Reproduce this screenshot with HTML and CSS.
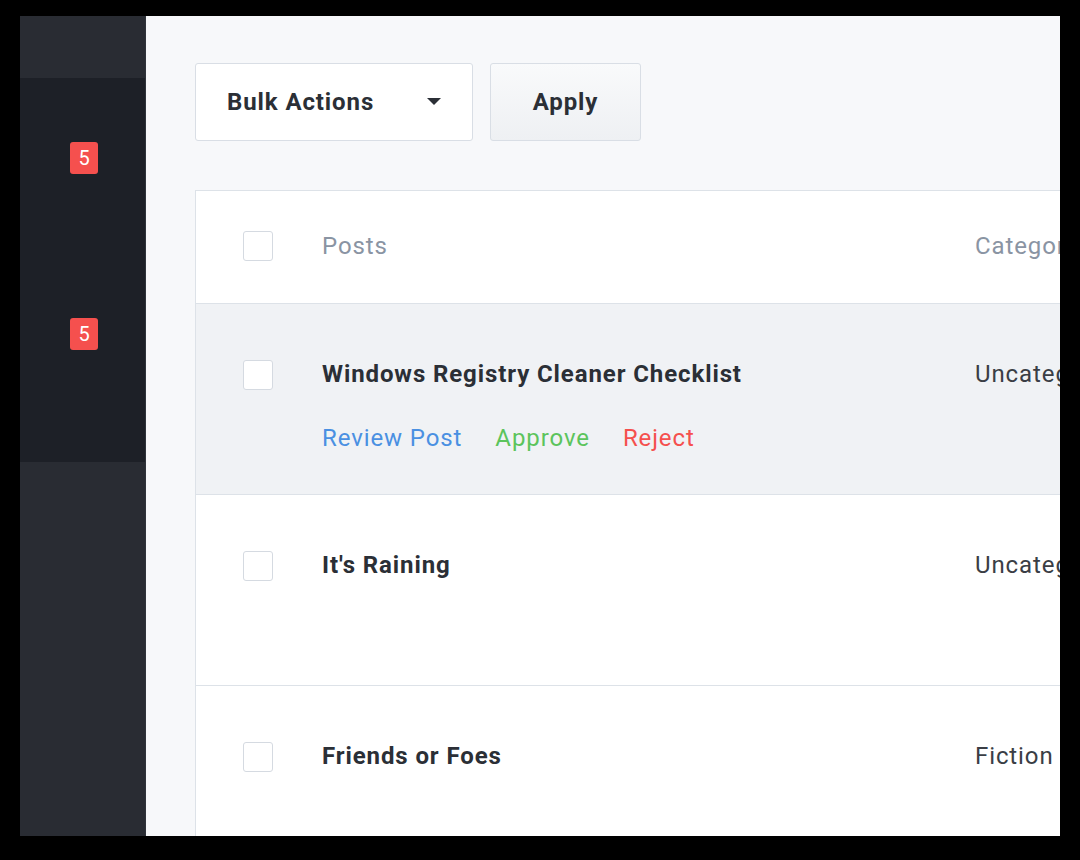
FILE: index.html
```html
<!DOCTYPE html>
<html lang="en">
<head>
    <meta charset="UTF-8">
    <meta name="viewport" content="width=device-width, initial-scale=1.0">
    <title>Pending Posts</title>
    <link rel="stylesheet" href="styles.css">
</head>
<body>
    <div class="frame">
        <!-- Sidebar -->
        <aside class="sidebar">
            <div class="sidebar-top"></div>
            <div class="sidebar-menu">
                <div class="menu-item"><span class="badge">5</span></div>
                <div class="menu-item"><span class="badge">5</span></div>
            </div>
        </aside>

        <!-- Main area -->
        <main class="main">
            <div class="toolbar">
                <div class="select">
                    <span>Bulk Actions</span>
                    <span class="caret"></span>
                </div>
                <button class="btn">Apply</button>
            </div>

            <div class="table">
                <div class="row head">
                    <span class="check"></span>
                    <div class="col-title">Posts</div>
                    <div class="col-cat">Category</div>
                </div>
                <div class="row hover">
                    <span class="check"></span>
                    <div class="col-title">
                        <div class="post-title">Windows Registry Cleaner Checklist</div>
                        <div class="actions">
                            <a class="review" href="#">Review Post</a>
                            <a class="approve" href="#">Approve</a>
                            <a class="reject" href="#">Reject</a>
                        </div>
                    </div>
                    <div class="col-cat">Uncategorized</div>
                </div>
                <div class="row">
                    <span class="check"></span>
                    <div class="col-title">
                        <div class="post-title">It's Raining</div>
                        <div class="actions">
                            <a class="review" href="#">Review Post</a>
                            <a class="approve" href="#">Approve</a>
                            <a class="reject" href="#">Reject</a>
                        </div>
                    </div>
                    <div class="col-cat">Uncategorized</div>
                </div>
                <div class="row">
                    <span class="check"></span>
                    <div class="col-title">
                        <div class="post-title">Friends or Foes</div>
                        <div class="actions">
                            <a class="review" href="#">Review Post</a>
                            <a class="approve" href="#">Approve</a>
                            <a class="reject" href="#">Reject</a>
                        </div>
                    </div>
                    <div class="col-cat">Fiction</div>
                </div>
            </div>
        </main>
    </div>
</body>
</html>
```

FILE: styles.css
```css
/* Moderation screen, dark sidebar + posts table */
body {
    margin: 0;
    background: #000;
    font-family: Roboto, "Liberation Sans", Arial, sans-serif;
    color: #2b2f36;
}
.frame {
    display: flex;
    width: 1040px;
    height: 820px;
    margin: 16px 20px;
    overflow: hidden;
    background: #f7f8fa;
}

/* Sidebar */
.sidebar {
    width: 126px;
    flex-shrink: 0;
    display: flex;
    flex-direction: column;
    background: #292c33;
    border-right: 1px solid #30343b;
    box-sizing: border-box;
}
.sidebar-top {
    height: 62px;
}
.sidebar-menu {
    height: 384px;
    background: #1d2027;
}
.menu-item {
    height: 192px;
    display: flex;
    align-items: center;
    padding-left: 50px;
}
.menu-item:first-child {
    height: 160px;
}
.badge {
    width: 28px;
    height: 32px;
    border-radius: 3px;
    background: #f5504e;
    color: #fff;
    font-size: 20px;
    line-height: 32px;
    text-align: center;
}

/* Main */
.main {
    flex: 1;
    padding: 47px 0 0 49px;
    min-width: 0;
    font-size: 24px;
    letter-spacing: 0.9px;
}
.toolbar {
    display: flex;
    gap: 17px;
}
.select {
    box-sizing: border-box;
    width: 278px;
    height: 78px;
    padding: 0 31px 0 31px;
    display: flex;
    align-items: center;
    justify-content: space-between;
    background: #fff;
    border: 1px solid #d9dee5;
    border-radius: 3px;
    font-weight: bold;
    line-height: 28px;
}
.caret {
    width: 0;
    height: 0;
    margin-top: -2px;
    border-left: 7px solid transparent;
    border-right: 7px solid transparent;
    border-top: 7px solid #2b2f36;
}
.btn {
    width: 151px;
    height: 78px;
    padding-bottom: 2px;
    background: linear-gradient(#f9fafb, #eef0f3);
    border: 1px solid #d9dee5;
    border-radius: 3px;
    font-family: inherit;
    font-size: 24px;
    letter-spacing: 0.9px;
    font-weight: bold;
    color: #2b2f36;
}

/* Table */
.table {
    margin-top: 49px;
    width: 1000px;
    border: 1px solid #dde2e8;
    border-right: 0;
    background: #fff;
}
.row {
    display: grid;
    grid-template-columns: 30px 604px 1fr;
    column-gap: 49px;
    padding: 56px 0 0 47px;
    height: 191px;
    box-sizing: border-box;
    border-top: 1px solid #dde2e8;
    line-height: 28px;
}
.row.head {
    height: 112px;
    padding-top: 0;
    padding-bottom: 2px;
    align-items: center;
    border-top: 0;
    color: #8a94a3;
}
.row.hover {
    background: #f0f2f5;
}
.check {
    width: 28px;
    height: 28px;
    border: 1px solid #d5dae1;
    border-radius: 3px;
    background: #fff;
}
.post-title {
    font-weight: bold;
}
.col-cat {
    color: #3a3e45;
    white-space: nowrap;
}
.row.head .col-cat {
    color: #8a94a3;
}
.actions {
    margin-top: 36px;
    display: flex;
    gap: 33px;
    visibility: hidden;
}
.row.hover .actions {
    visibility: visible;
}
.actions a {
    text-decoration: none;
}
.review { color: #4a90e2; }
.approve { color: #5cc45c; }
.reject { color: #f5504e; }
```
